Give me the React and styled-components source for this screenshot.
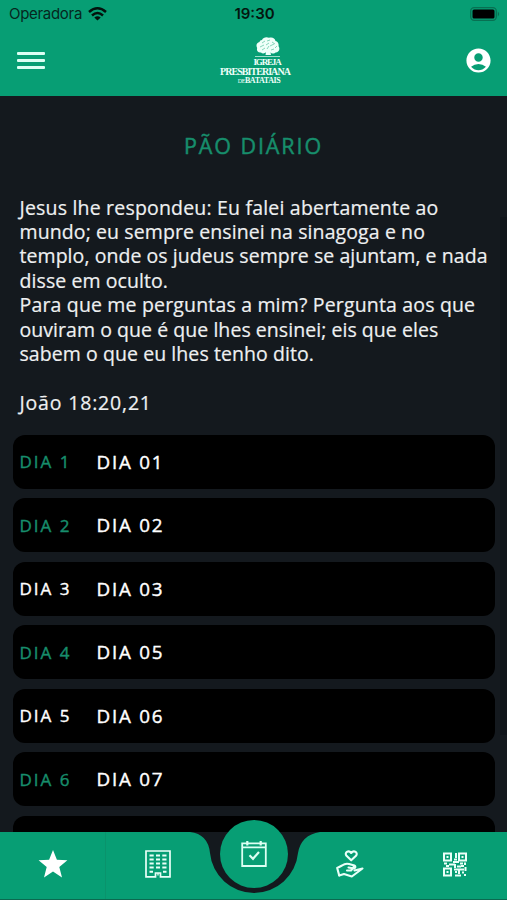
import React from 'react';
import styled, { createGlobalStyle } from 'styled-components';
import { MdAccountCircle } from 'react-icons/md';

const green = '#079e74';
const dark = '#14191e';

const GlobalStyle = createGlobalStyle`
  * {
    box-sizing: border-box;
  }

  body {
    margin: 0;
    background: ${dark};
  }
`;

const Screen = styled.div`
  display: flex;
  flex-direction: column;
  width: 507px;
  height: 900px;
  overflow: hidden;
  background: ${dark};
  color: #fff;
  font-family: 'Open Sans', 'Noto Sans', sans-serif;
`;

const StatusBar = styled.div`
  display: grid;
  grid-template-columns: 1fr auto 1fr;
  align-items: center;
  height: 27px;
  padding: 0 7px 0 9px;
  background: ${green};
  color: #06271e;
  font-family: Inter, sans-serif;
  font-size: 15px;
`;

const Carrier = styled.div`
  display: flex;
  align-items: center;
  gap: 6px;
  letter-spacing: -0.3px;
`;

const Clock = styled.div`
  color: #04160f;
  font-weight: 600;
`;

const BatteryIcon = styled.svg`
  justify-self: end;
`;

const Header = styled.header`
  display: grid;
  grid-template-columns: 1fr auto 1fr;
  align-items: center;
  height: 69px;
  padding: 0 14px 2px 17px;
  background: ${green};
`;

const MenuButton = styled.div`
  display: flex;
  flex-direction: column;
  gap: 4.5px;
  width: 28px;
`;

const MenuLine = styled.span`
  height: 2.7px;
  border-radius: 1px;
  background: #dcfff4;
`;

const ProfileIcon = styled(MdAccountCircle)`
  justify-self: end;
  font-size: 29px;
`;

const Brand = styled.div`
  display: flex;
  flex-direction: column;
  align-items: center;
  width: 72px;
  padding-top: 1px;
  color: #effff9;
  font-family: 'Liberation Serif', serif;
  white-space: nowrap;
`;

const BrandRule = styled.div`
  width: 25px;
  height: 1px;
  margin: 1.5px 0 1px 24px;
  background: #9fdcc8;
`;

const BrandTree = styled.svg`
  margin-left: 26px;
`;

const BrandTop = styled.div`
  margin-left: 24px;
  font-size: 9px;
  font-weight: 700;
  line-height: 9px;
  letter-spacing: -1.15px;
`;

const BrandName = styled.div`
  font-size: 10px;
  font-weight: 700;
  line-height: 10px;
  letter-spacing: -0.95px;
`;

const BrandCity = styled.div`
  margin-left: 8px;
  font-size: 8px;
  font-weight: 700;
  line-height: 8px;
  letter-spacing: -0.4px;

  small {
    font-size: 6px;
    font-weight: 400;
  }
`;

const Content = styled.main`
  position: relative;
  flex: 1;
  min-height: 0;
  overflow: hidden;
  padding: 35px 12.5px 0;
`;

const ScrollThumb = styled.div`
  position: absolute;
  top: 121px;
  right: 0;
  width: 7px;
  height: 518px;
  background: #10151a;
`;

const Title = styled.h1`
  margin: 0 0 34.5px;
  color: #178e6c;
  font-size: 21.5px;
  font-weight: 400;
  line-height: 30px;
  letter-spacing: 1.9px;
  text-align: center;
  -webkit-text-stroke: 0.45px;
`;

const Verse = styled.div`
  padding-left: 7px;
  color: #eef0f1;
  font-size: 19.5px;
  line-height: 24.45px;
  -webkit-text-stroke: 0.2px;
`;

const Line = styled.div`
  min-height: 24.45px;
  letter-spacing: ${props => props.$spacing || 0}px;
  white-space: nowrap;
`;

const DayList = styled.div`
  display: flex;
  flex-direction: column;
  gap: 9.5px;
  margin-top: 19.4px;
`;

const DayRow = styled.div`
  display: flex;
  align-items: center;
  flex-shrink: 0;
  height: 54px;
  padding-left: 7px;
  border-radius: 12px;
  background: #000;
  -webkit-text-stroke: 0.4px;
`;

const DayNumber = styled.div`
  width: 77px;
  color: ${props => (props.$active ? '#178e6c' : '#fff')};
  font-size: 17px;
  letter-spacing: 2px;
`;

const DayName = styled.div`
  font-size: 18.8px;
  letter-spacing: 1.8px;
`;

const TabBar = styled.nav`
  position: relative;
  display: grid;
  grid-template-columns: 106px 104px 88px 104px 105px;
  height: 68px;
  border-bottom: 1px solid #10362d;
`;

const TabBackground = styled.svg`
  position: absolute;
  top: 0;
  left: 0;
`;

const Tab = styled.div`
  position: relative;
  display: flex;
  align-items: center;
  justify-content: center;
  padding-bottom: 3px;
`;

const Divided = styled(Tab)`
  border-right: 1px solid #0a936c;
`;

const CenterTab = styled.div`
  position: absolute;
  top: -12.5px;
  left: 219.7px;
  display: flex;
  align-items: center;
  justify-content: center;
  width: 68.6px;
  height: 68.6px;
  border-radius: 50%;
  background: ${green};
`;

const verse = [
  { text: 'Jesus lhe respondeu: Eu falei abertamente ao', spacing: 0.19 },
  { text: 'mundo; eu sempre ensinei na sinagoga e no', spacing: 0.1 },
  { text: 'templo, onde os judeus sempre se ajuntam, e nada', spacing: 0.06 },
  { text: 'disse em oculto.', spacing: 0.08 },
  { text: 'Para que me perguntas a mim? Pergunta aos que', spacing: 0.17 },
  { text: 'ouviram o que é que lhes ensinei; eis que eles', spacing: 0.05 },
  { text: 'sabem o que eu lhes tenho dito.', spacing: 0.07 },
  { text: '', spacing: 0 },
  { text: 'João 18:20,21', spacing: 0.82 },
];

const days = [
  { number: 1, name: 'DIA 01', active: true },
  { number: 2, name: 'DIA 02', active: true },
  { number: 3, name: 'DIA 03', active: false },
  { number: 4, name: 'DIA 05', active: true },
  { number: 5, name: 'DIA 06', active: false },
  { number: 6, name: 'DIA 07', active: true },
];

const WifiIcon = () => (
  <svg width="19" height="14" viewBox="0 0 19 14" fill="none" stroke="#03120d" strokeWidth="2.5">
    <path d="M1 5Q9.500-2.400 18 5" />
    <path d="M4 8.500Q9.500 3.600 15 8.500" />
    <path d="M9.500 13.500L6.300 10.500Q9.500 7.800 12.700 10.500Z" fill="#03120d" stroke="none" />
  </svg>
);

const Battery = () => (
  <BatteryIcon width="30" height="14" viewBox="0 0 30 14">
    <rect x="0.7" y="0.7" width="25.600" height="12.600" rx="3.500" fill="none" stroke="#087052" strokeWidth="1.300" />
    <rect x="2.500" y="2.500" width="22" height="9" rx="1.500" fill="#000" />
    <path d="M27.800 4.500Q30.500 7 27.800 9.500Z" fill="#087052" />
  </BatteryIcon>
);

const Logo = () => (
  <Brand>
    <BrandTree width="24" height="18" viewBox="0 0 24 18" fill="#effff9">
      <path d="M6 3C7 0 11-.5 13 .8C16-.3 19 1 19.500 4C22 4.500 23 7 22.500 9C24.500 12 23 15.500 19.500 15.500C18 17.500 15 16.500 14.500 15L15 18H9.500L10 15C8.500 17 6 16.500 5 15.500C1.500 16 .3 13 1.200 11C-.5 8 1 5.500 3.500 5C3.700 3.700 4.700 3 6 3Z" />
      <path
        d="M6 6l3-2M11 4l3-1M16 5l3 2M4 10l4-2M10 8l3-2M14 9l4-2M19 11l2-2M6 13l3-2M11 12l2-3M15 13l3-1"
        stroke="#6cc9ab"
        strokeWidth=".8"
        fill="none"
      />
    </BrandTree>
    <BrandRule />
    <BrandTop>IGREJA</BrandTop>
    <BrandName>PRESBITERIANA</BrandName>
    <BrandCity>
      <small>DE</small>BATATAIS
    </BrandCity>
  </Brand>
);

const StarIcon = () => (
  <svg width="30" height="28" viewBox="0 0 30 28" fill="#fff">
    <path d="M15 0L18.900 9.700L29.400 10.200L21.300 16.900L24 27.500L15 21.600L6 27.500L8.700 16.900L.6 10.200L11.100 9.700Z" />
  </svg>
);

const BuildingIcon = () => (
  <svg width="26" height="28" viewBox="0 0 26 28" fill="none" stroke="#eafff8" strokeWidth="1.700">
    <path d="M10.500 26.800H1V1H25V26.800H15.500V23H10.500Z" />
    <path d="M13 23V25.500" strokeWidth="1.300" />
    {[5.5, 9.5, 13.5, 17.5].map(y => (
      <path key={y} d={`M4.500 ${y}H8.700M11 ${y}H15M17.300 ${y}H21.500`} strokeWidth="2" />
    ))}
    <path d="M4.500 21.800H8M18 21.800H21.500" strokeWidth="2" />
  </svg>
);

const CalendarIcon = () => (
  <svg width="26" height="28" viewBox="0 0 26 28" fill="none" stroke="#dcfff3" strokeWidth="1.800">
    <path d="M1.200 3.300H24.800V26H1.200ZM1.200 7.300H24.800" />
    <path d="M6.300 1V5.500M19.700 1V5.500" strokeWidth="2.200" />
    <path d="M8.500 15.300L12 18.800L18 12" strokeWidth="2.200" />
  </svg>
);

const DonateIcon = () => (
  <svg width="28" height="28" viewBox="0 0 28 28" fill="none" stroke="#eafff8" strokeWidth="2.100" strokeLinejoin="round" strokeLinecap="round">
    <path d="M15.200 10.300L10.500 5.800C8 2.800 12.500-.5 15.200 3C18-.5 22.500 2.800 20 5.800Z" />
    <path d="M3.200 25.500L1.200 18L6 15.500Q9.500 13 13 14L18.500 15.500Q20.500 17.300 18 18.500L12.500 17.500" />
    <path d="M18.500 20.500L26.500 18.500L15.800 26.500L8 24L3.200 25.500M18.500 16L15 20.500L11 20.500" />
  </svg>
);

const QrIcon = () => (
  <svg width="24" height="25" viewBox="0 0 24 25" fill="none" stroke="#eafff8" strokeWidth="2">
    <path d="M1 1.500H8V8.500H1ZM16 1.500H23V8.500H16ZM1 16.500H8V23.500H1Z" />
    <path d="M3.500 4H5.500V6H3.500ZM18.500 4H20.500V6H18.500ZM3.500 19H5.500V21H3.500Z" fill="#eafff8" stroke="none" />
    <path d="M13 1V6M11 7.500H14M10 10H16M1 11.500H4M6 12.500H12M3 14H6M17 11.500H20M22 10.500V13M12 12V16M18 14H21M14 14.500H18M11 17.500H21M12 20H14M16 18V22M12 23.500H18M19 20.500H21M22.500 15V19M21 23H23" />
  </svg>
);

const App = () => (
  <Screen>
    <GlobalStyle />
    <StatusBar>
      <Carrier>
        Operadora
        <WifiIcon />
      </Carrier>
      <Clock>19:30</Clock>
      <Battery />
    </StatusBar>
    <Header>
      <MenuButton>
        <MenuLine />
        <MenuLine />
        <MenuLine />
      </MenuButton>
      <Logo />
      <ProfileIcon />
    </Header>
    <Content>
      <ScrollThumb />
      <Title>PÃO DIÁRIO</Title>
      <Verse>
        {verse.map(line => (
          <Line key={line.text} $spacing={line.spacing}>
            {line.text}
          </Line>
        ))}
      </Verse>
      <DayList>
        {days.map(day => (
          <DayRow key={day.number}>
            <DayNumber $active={day.active}>DIA {day.number}</DayNumber>
            <DayName>{day.name}</DayName>
          </DayRow>
        ))}
        <DayRow />
      </DayList>
    </Content>
    <TabBar>
      <TabBackground width="507" height="68" viewBox="0 0 507 68">
        <path
          d="M0 0H190Q208 2 210 21A44.200 44.200 0 0 0 298 21Q301 3 320 0H507V67.500H0Z"
          fill={green}
        />
      </TabBackground>
      <Divided>
        <StarIcon />
      </Divided>
      <Tab>
        <BuildingIcon />
      </Tab>
      <CenterTab>
        <CalendarIcon />
      </CenterTab>
      <span />
      <Tab>
        <DonateIcon />
      </Tab>
      <Tab>
        <QrIcon />
      </Tab>
    </TabBar>
  </Screen>
);

export default App;
